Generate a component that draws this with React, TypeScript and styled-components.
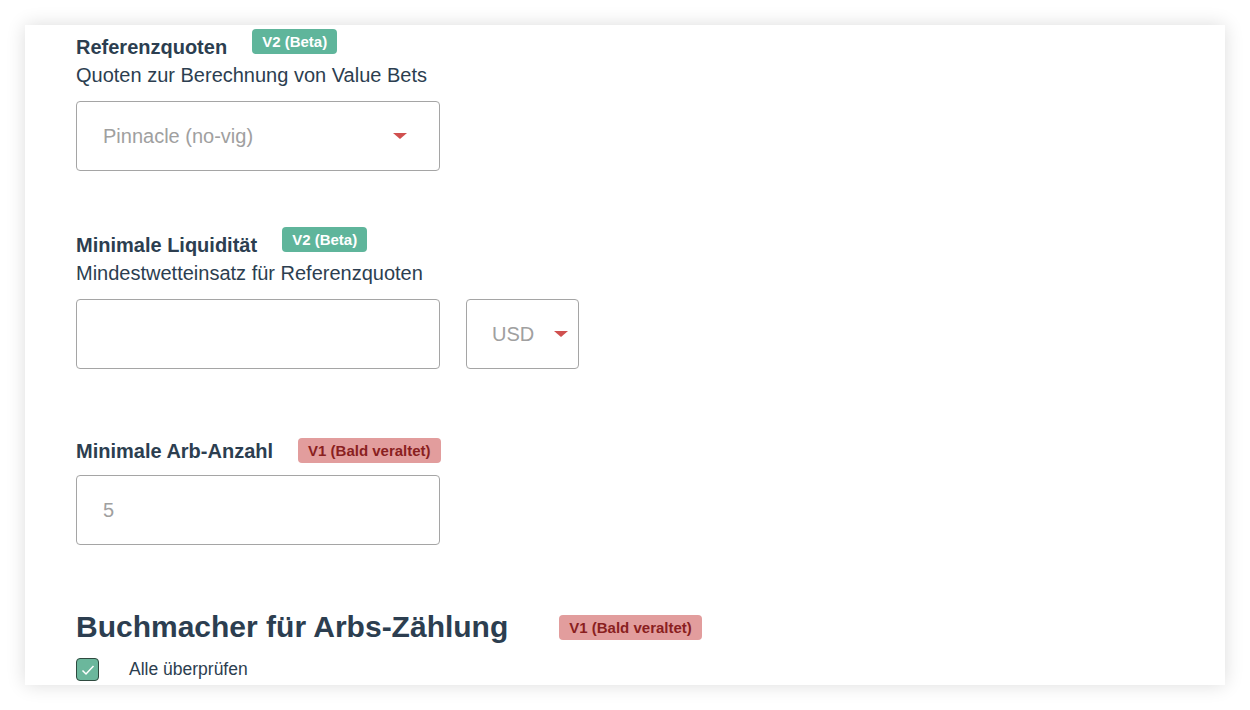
import React from 'react'
import styled, { createGlobalStyle } from 'styled-components'

const Global = createGlobalStyle`
    body{
        margin: 0;
        background: #fff;
        font-family: "Liberation Sans", Arial, sans-serif;
        color: #2c3e50;
    }
`

const Page = styled.div`
    width: 1250px;
    height: 710px;
    padding: 25px;
    box-sizing: border-box;
`

const Card = styled.div`
    height: 660px;
    background: #fff;
    box-shadow: 0 0 18px rgba(0, 0, 0, 0.14);
    overflow: hidden;
    padding: 4px 0 0 51px;
    box-sizing: border-box;
`

const Section = styled.section<{ gap: number }>`
    margin-top: ${p => p.gap}px;
`

const TitleRow = styled.div<{ center?: boolean }>`
    display: flex;
    align-items: ${p => (p.center ? 'center' : 'flex-start')};
    gap: 25px;
    height: 25px;
`

const Title = styled.h3<{ drop?: number }>`
    margin: ${p => p.drop || 0}px 0 0 0;
    font-size: 20px;
    line-height: 22px;
    font-weight: 700;
    color: #2c3e50;
`

const Badge = styled.span<{ kind: 'beta' | 'old' }>`
    display: inline-flex;
    align-items: center;
    height: 25px;
    padding: 0 10px;
    border-radius: 4px;
    font-size: 15px;
    font-weight: 700;
    background: ${p => (p.kind === 'beta' ? '#5fb59b' : '#e29d9d')};
    color: ${p => (p.kind === 'beta' ? '#fff' : '#8a1f1f')};
    white-space: nowrap;
`

const Sub = styled.p`
    margin: 10px 0 0 0;
    font-size: 20px;
    line-height: 22px;
    color: #2c3e50;
`

const FieldRow = styled.div<{ top: number }>`
    display: flex;
    gap: 26px;
    margin-top: ${p => p.top}px;
`

const Box = styled.div<{ w: number; padL?: number; padR?: number }>`
    width: ${p => p.w}px;
    height: 70px;
    box-sizing: border-box;
    border: 1px solid #a5a5a5;
    border-radius: 4px;
    display: flex;
    align-items: center;
    justify-content: space-between;
    padding: 0 ${p => p.padR ?? 32}px 0 ${p => p.padL ?? 26}px;
    font-size: 20px;
    color: #a0a0a0;
`

const Caret = styled.span`
    width: 0;
    height: 0;
    border-left: 7px solid transparent;
    border-right: 7px solid transparent;
    border-top: 6px solid #d0504f;
`

const Heading = styled.h2`
    margin: 0;
    font-size: 30px;
    line-height: 34px;
    font-weight: 700;
    color: #2c3e50;
`

const HeadRow = styled.div`
    display: flex;
    align-items: center;
    gap: 51px;
    margin-top: 65px;
`

const CheckRow = styled.label`
    display: flex;
    align-items: center;
    gap: 30px;
    margin-top: 14px;
    font-size: 17.5px;
    color: #2c3e50;
`

const Check = styled.span`
    width: 23px;
    height: 23px;
    box-sizing: border-box;
    border: 1.5px solid #2f4a3f;
    border-radius: 4px;
    background: #6bb79c;
    display: flex;
    align-items: center;
    justify-content: center;
`

const Select = ({ w, text, padL, padR }: { w: number; text: string; padL?: number; padR?: number }) => (
    <Box w={w} padL={padL} padR={padR}>
        <span>{text}</span>
        <Caret />
    </Box>
)

const App = () => {
    return (
        <Page>
            <Global />
            <Card>
                <Section gap={0}>
                    <TitleRow>
                        <Title drop={7}>Referenzquoten</Title>
                        <Badge kind="beta">V2 (Beta)</Badge>
                    </TitleRow>
                    <Sub>Quoten zur Berechnung von Value Bets</Sub>
                    <FieldRow top={15}>
                        <Select w={364} text="Pinnacle (no-vig)" />
                    </FieldRow>
                </Section>

                <Section gap={56}>
                    <TitleRow>
                        <Title drop={7}>Minimale Liquidität</Title>
                        <Badge kind="beta">V2 (Beta)</Badge>
                    </TitleRow>
                    <Sub>Mindestwetteinsatz für Referenzquoten</Sub>
                    <FieldRow top={15}>
                        <Box w={364} />
                        <Select w={113} text="USD" padL={25} padR={10} />
                    </FieldRow>
                </Section>

                <Section gap={69}>
                    <TitleRow center>
                        <Title>Minimale Arb-Anzahl</Title>
                        <Badge kind="old">V1 (Bald veraltet)</Badge>
                    </TitleRow>
                    <FieldRow top={12}>
                        <Box w={364}>
                            <span>5</span>
                        </Box>
                    </FieldRow>
                </Section>

                <HeadRow>
                    <Heading>Buchmacher für Arbs-Zählung</Heading>
                    <Badge kind="old">V1 (Bald veraltet)</Badge>
                </HeadRow>
                <CheckRow>
                    <Check>
                        <svg width="16" height="16" viewBox="0 0 16 16">
                            <path d="M2.5 8.5 L6 12 L13.5 4" fill="none" stroke="#fff" strokeWidth="1.5" />
                        </svg>
                    </Check>
                    Alle überprüfen
                </CheckRow>
            </Card>
        </Page>
    )
}

export default App
